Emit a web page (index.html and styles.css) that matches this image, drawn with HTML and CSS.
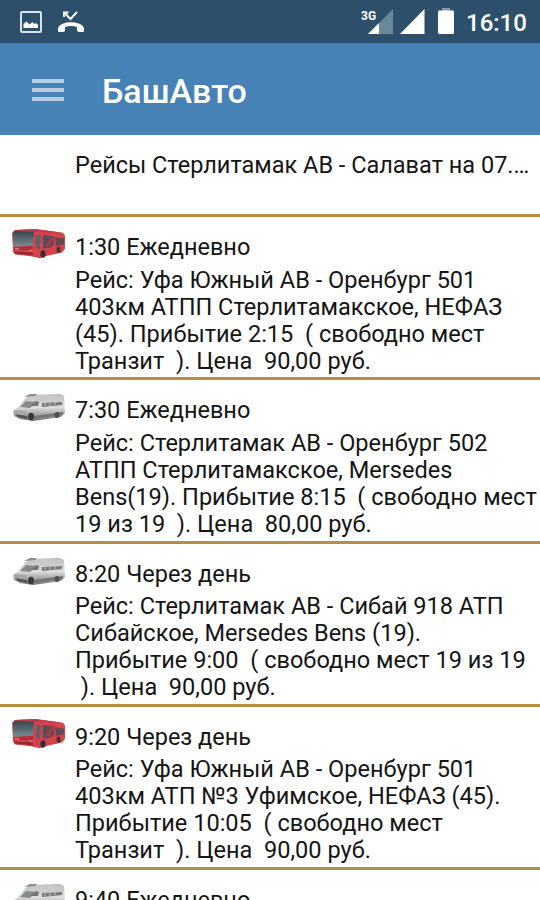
FILE: index.html
```html
<!DOCTYPE html>
<html lang="ru">
<head>
    <meta charset="UTF-8">
    <meta name="viewport" content="width=device-width, initial-scale=1.0">
    <title>БашАвто</title>
    <link rel="stylesheet" href="styles.css">
</head>
<body>
    <!-- bus and van pictures used by the list -->
    <svg class="sprites" width="0" height="0">
        <defs>
            <linearGradient id="glass" x2="0" y2="1">
                <stop offset="0" stop-color="#35454f"/>
                <stop offset="1" stop-color="#7b9093"/>
            </linearGradient>
            <linearGradient id="silver" x2="0" y2="1">
                <stop offset="0" stop-color="#b9bcba"/>
                <stop offset=".5" stop-color="#dcdedc"/>
                <stop offset="1" stop-color="#6f716f"/>
            </linearGradient>
        </defs>
        <symbol id="bus" viewBox="0 0 54 34" preserveAspectRatio="none">
            <path d="M0 4L3 1l20-1 28 4 2 3v14l-3 4-17 4-5 2-9-2-16-2-2-3z" fill="#d5424a"/>
            <path d="M3 1l20-1 28 4-28-1L2 4z" fill="#b5404a"/>
            <path d="M1 4l2-2 19 1-1 15-20 1z" fill="url(#glass)"/>
            <path d="M1 19l20-1v5L2 22z" fill="#b3303a"/>
            <path d="M2 24l19 1v3L3 26z" fill="#8c2932"/>
            <path d="M24 6l5 1-1 14-4-1z" fill="#63606c"/>
            <path d="M31 6l11 2v9l-4 3-7 1zM43 9l9 1v6l-8 2z" fill="#5f4a56"/>
            <path d="M34 17l6-9 3 1-6 10z" fill="#a63b48"/>
            <ellipse cx="31" cy="26.500" rx="2.600" ry="4" fill="#352d34"/>
            <ellipse cx="46.500" cy="22" rx="2" ry="3.500" fill="#45323a"/>
            <path d="M3 21h4M17 23h4" stroke="#dd737a" stroke-width="1.500"/>
        </symbol>
        <symbol id="van" viewBox="0 0 54 28" preserveAspectRatio="none">
            <path d="M1 17l5-4 7-8 5-4 30-1 4 2 1 17-4 4-28 4-13-2-6-3z" fill="url(#silver)"/>
            <path d="M15 3l8-2 27 1 1 3-28 1-8-1z" fill="#c8cac8"/>
            <path d="M8 13l6-6 10 1-6 6z" fill="#868b89"/>
            <path d="M18 12l6-5 3 1-1 4z" fill="#727775"/>
            <path d="M30 9l20-1v3l-20 2z" fill="#777b79"/>
            <path d="M33 9v3M38 9v3M43 8v3" stroke="#bfc3c0"/>
            <path d="M12 3l6-3h7l-2 2z" fill="#898d8a"/>
            <path d="M2 16l12 1v3L3 19z" fill="#a3a6a4"/>
            <path d="M3 20l12 2v3l-9-2z" fill="#535553"/>
            <path d="M22 22l29-4v3l-29 4z" fill="#747674"/>
            <ellipse cx="19" cy="22.500" rx="3" ry="3.800" fill="#363836"/>
            <ellipse cx="45" cy="21" rx="2.500" ry="3" fill="#4e504e"/>
        </symbol>
    </svg>

    <div class="status">
        <svg class="pic" width="22" height="22" viewBox="0 0 22 22">
            <rect x="1" y="1" width="20" height="20" rx="1" fill="none" stroke="#d9e1e7" stroke-width="2"/>
            <path d="M3.500 17v-4l3-2.500 3 3 3-2.500 2 2 1.500-1 2 2v3z" fill="#fff"/>
        </svg>
        <svg class="missed" width="28" height="22" viewBox="0 0 28 22">
            <path d="M7 6V1.500h4.500M7.500 2l6 6L20 1" fill="none" stroke="#fff" stroke-width="2"/>
            <path d="M1 18c0-9 26-9 26 0v2q0 1-1 1h-4q-2 0-2-2v-3q-6-2-12 0v3q0 2-2 2H2q-1 0-1-1z" fill="#fff"/>
        </svg>
        <svg class="system" width="94" height="28" viewBox="0 0 94 28">
            <path d="M32 3v25H7z" fill="#6b879c"/>
            <path d="M18 17v11H7z" fill="#fff"/>
            <path d="M0 3h17v13H0z" fill="#2c4f6b"/>
            <text class="net" x="0" y="13.500">3G</text>
            <path d="M63.500 3v25H39z" fill="#fff"/>
            <path d="M81 2h8v3h-8z" fill="#8299aa"/>
            <rect x="77" y="4.500" width="16" height="23.500" rx="1" fill="#fff"/>
        </svg>
        <span class="clock">16:10</span>
    </div>

    <div class="toolbar">
        <div class="menu"><i></i><i></i><i></i></div>
        <h1>БашАвто</h1>
    </div>

    <div class="caption">Рейсы Стерлитамак АВ - Салават на 07.…</div>

    <div class="trips">
        <div class="trip">
            <svg class="bus"><use href="#bus"/></svg>
            <div class="info">
                <div class="time">1:30 Ежедневно</div>
                <div class="text">Рейс: Уфа Южный АВ - Оренбург 501
403км АТПП Стерлитамакское, НЕФАЗ
(45). Прибытие 2:15  ( свободно мест
Транзит  ). Цена  90,00 руб.</div>
            </div>
        </div>
        <div class="trip">
            <svg class="van"><use href="#van"/></svg>
            <div class="info">
                <div class="time">7:30 Ежедневно</div>
                <div class="text">Рейс: Стерлитамак АВ - Оренбург 502
АТПП Стерлитамакское, Mersedes
Bens(19). Прибытие 8:15  ( свободно мест
19 из 19  ). Цена  80,00 руб.</div>
            </div>
        </div>
        <div class="trip">
            <svg class="van"><use href="#van"/></svg>
            <div class="info">
                <div class="time">8:20 Через день</div>
                <div class="text">Рейс: Стерлитамак АВ - Сибай 918 АТП
Сибайское, Mersedes Bens (19).
Прибытие 9:00  ( свободно мест 19 из 19
 ). Цена  90,00 руб.</div>
            </div>
        </div>
        <div class="trip">
            <svg class="bus"><use href="#bus"/></svg>
            <div class="info">
                <div class="time">9:20 Через день</div>
                <div class="text">Рейс: Уфа Южный АВ - Оренбург 501
403км АТП №3 Уфимское, НЕФАЗ (45).
Прибытие 10:05  ( свободно мест
Транзит  ). Цена  90,00 руб.</div>
            </div>
        </div>
        <div class="trip">
            <svg class="van"><use href="#van"/></svg>
            <div class="info">
                <div class="time">9:40 Ежедневно</div>
            </div>
        </div>
    </div>
</body>
</html>
```
FILE: styles.css
```css
*{
    box-sizing: border-box;
}
body{
    margin: 0;
    height: 900px;
    display: flex;
    flex-direction: column;
    overflow: hidden;
    background-color: #fff;
    color: #151515;
    font-family: Roboto, sans-serif;
    font-size: 23.5px;
}
.sprites{
    position: absolute;
}
.status{
    flex: none;
    display: flex;
    height: 43px;
    padding-left: 20px;
    background-color: #2c4f6b;
}
.pic{
    margin-top: 11px;
}
.missed{
    margin: 11px 0 0 15px;
}
.system{
    margin: 6px 0 0 276px;
}
.net{
    fill: #fff;
    font-size: 12px;
    font-weight: bold;
}
.clock{
    margin-left: 11px;
    color: #fff;
    font-size: 24px;
    font-weight: 500;
    line-height: 46px;
}
.toolbar{
    flex: none;
    display: flex;
    align-items: center;
    height: 92px;
    padding-left: 32px;
    background-color: #4682b6;
}
.menu{
    display: flex;
    flex-direction: column;
    gap: 5px;
    width: 32px;
    margin: 2px 38px 0 0;
}
.menu i{
    height: 4px;
    background-color: #b5cde2;
}
h1{
    margin: 4px 0 0;
    color: #fff;
    font-size: 34px;
    font-weight: 500;
    line-height: 40px;
}
.caption{
    flex: none;
    height: 82px;
    padding: 17px 0 0 75px;
    border-bottom: 3px solid #b58f42;
    line-height: 27px;
    white-space: nowrap;
}
.trips{
    flex: 1;
    min-height: 0;
    overflow: hidden;
}
.trip{
    display: flex;
    height: 163.3px;
    padding-left: 12px;
    border-bottom: 3px solid #b58f42;
}
.trip svg{
    flex: none;
    width: 54px;
    margin-right: 9px;
}
.bus{
    height: 32px;
    margin-top: 12px;
}
.van{
    height: 28px;
    margin-top: 14px;
}
.info{
    padding-top: 17px;
    line-height: 27px;
}
.text{
    margin-top: 5.500px;
    font-size: 23.550px;
    white-space: pre;
}
```
